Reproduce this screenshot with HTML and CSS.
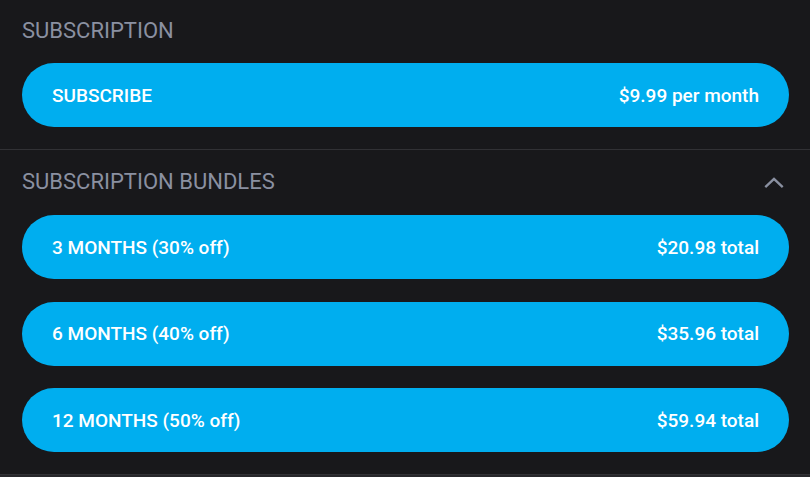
FILE: index.html
```html
<!DOCTYPE html>
<html>
<head>
<meta charset="utf-8">
<link rel="stylesheet" href="styles.css">
</head>
<body>
<div class="panel">
  <section class="section section-first">
    <div class="section-head">
      <h2 class="section-title">SUBSCRIPTION</h2>
    </div>
    <div class="options">
      <button class="option"><span class="option-label">SUBSCRIBE</span><span class="option-price">$9.99 per month</span></button>
    </div>
  </section>
  <section class="section">
    <div class="section-head">
      <h2 class="section-title">SUBSCRIPTION BUNDLES</h2>
      <svg class="chevron" width="24" height="24" viewBox="0 0 24 24"><polyline points="2.5,16.5 12,7.5 21.5,16.5" fill="none" stroke="currentColor" stroke-width="2.6" stroke-linejoin="miter"/></svg>
    </div>
    <div class="options">
      <button class="option"><span class="option-label">3 MONTHS (30% off)</span><span class="option-price">$20.98 total</span></button>
      <button class="option"><span class="option-label">6 MONTHS (40% off)</span><span class="option-price">$35.96 total</span></button>
      <button class="option"><span class="option-label">12 MONTHS (50% off)</span><span class="option-price">$59.94 total</span></button>
    </div>
  </section>
  <div class="next-strip"></div>
</div>
</body>
</html>
```

FILE: styles.css
```css
html, body {
  margin: 0;
  padding: 0;
  background: #18181b;
  height: 100%;
  overflow: hidden;
}
body {
  font-family: Roboto, "Liberation Sans", sans-serif;
}
.panel {
  display: flex;
  flex-direction: column;
}
.section {
  padding: 20px 21px 22px 22px;
  border-bottom: 1px solid #313135;
}
.section-first {
  padding-top: 19px;
}
.section-head {
  display: flex;
  align-items: center;
  justify-content: space-between;
  height: 24px;
  margin-bottom: 21px;
}
.section-first .section-head {
  margin-bottom: 20px;
}
.section-title {
  margin: 0;
  font-size: 22px;
  line-height: 24px;
  font-weight: 400;
  color: #8a90a1;
  letter-spacing: 0;
}
.chevron {
  color: #8a90a1;
  width: 22px;
  height: 22px;
  margin-right: 4px;
  margin-top: 2px;
}
.options {
  display: flex;
  flex-direction: column;
  gap: 22.5px;
}
.option {
  display: flex;
  align-items: center;
  justify-content: space-between;
  height: 64px;
  padding: 0 30px;
  border: none;
  border-radius: 32px;
  background: #00aeef;
  color: #ffffff;
  font-family: Roboto, "Liberation Sans", sans-serif;
  font-size: 19px;
  font-weight: 500;
  cursor: pointer;
}
.next-strip {
  height: 4px;
  background: #27272b;
}
```
